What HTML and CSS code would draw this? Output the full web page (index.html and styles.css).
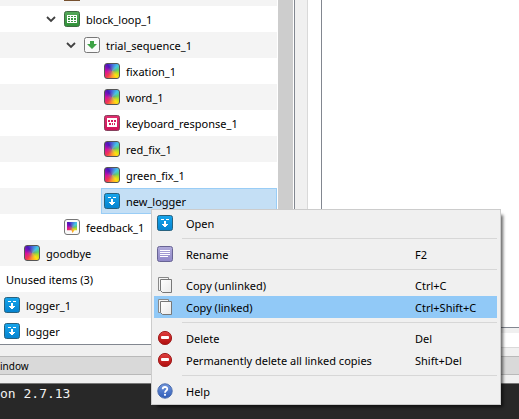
FILE: index.html
```html
<!DOCTYPE html>
<html lang="en">
<head>
<meta charset="utf-8">
<title>Experiment overview</title>
<link rel="stylesheet" href="styles.css">
</head>
<body>
<svg class="defs" aria-hidden="true">
  <defs>
    <linearGradient id="g-green" x2="0" y2="1"><stop stop-color="#56a85a"/><stop offset="1" stop-color="#2f9138"/></linearGradient>
    <linearGradient id="g-pink" x2="0" y2="1"><stop stop-color="#e0306f"/><stop offset="1" stop-color="#cf1259"/></linearGradient>
    <linearGradient id="g-blue" x2="0" y2="1"><stop stop-color="#16a5ec"/><stop offset="1" stop-color="#0583cf"/></linearGradient>
    <linearGradient id="g-violet" x2="0" y2="1"><stop stop-color="#b0aada"/><stop offset="1" stop-color="#9088c8"/></linearGradient>
    <linearGradient id="g-red" x2="0" y2="1"><stop stop-color="#e04040"/><stop offset="1" stop-color="#b00c0c"/></linearGradient>
    <linearGradient id="g-help" x2="0" y2="1"><stop stop-color="#7397dc"/><stop offset="1" stop-color="#2d5bb8"/></linearGradient>
    <linearGradient id="g-page" x2="1" y2="1"><stop stop-color="#ffffff"/><stop offset="1" stop-color="#e9e9e9"/></linearGradient>
    <symbol id="i-loop" viewBox="0 0 16 16">
      <rect x=".5" y=".5" width="15" height="15" rx="2" fill="url(#g-green)" stroke="#3f6b42"/>
      <path fill="#fff" d="M3 4h10v8H3z"/>
      <path fill="#3c9944" d="M4 5h2v1H4zM7 5h2v1H7zM10 5h2v1h-2zM4 7h2v2H4zM7 7h2v2H7zM10 7h2v2h-2zM4 10h2v1H4zM7 10h2v1H7zM10 10h2v1h-2z"/>
    </symbol>
    <symbol id="i-sequence" viewBox="0 0 16 16">
      <rect x=".5" y=".5" width="15" height="15" rx="2" fill="#fafafa" stroke="#777"/>
      <path fill="#3da245" d="M6 4h4v3h3l-5 5-5-5h3z"/>
    </symbol>
    <symbol id="i-keyboard" viewBox="0 0 16 16">
      <rect x=".5" y=".5" width="15" height="15" rx="2" fill="url(#g-pink)" stroke="#85405c"/>
      <rect x="3" y="3" width="10" height="9" fill="#fff"/>
      <path fill="#d81b60" d="M4 5h2v2H4zM7 5h2v2H7zM10 5h2v2h-2zM5 8h2v2H5zM8 8h1v2H8zM10 8h1v2h-1z"/>
    </symbol>
    <symbol id="i-logger" viewBox="0 0 16 16">
      <rect x=".5" y=".5" width="15" height="15" rx="2" fill="url(#g-blue)" stroke="#28627f"/>
      <path fill="#fff" d="M4 4h3v1H4zM9 4h3v1H9zM7 6h2v3h2v1h-1v1H9v1H7v-1H6v-1H5V9h2z"/>
    </symbol>
    <symbol id="i-rename" viewBox="0 0 16 16">
      <rect x=".5" y=".5" width="15" height="15" rx="2" fill="url(#g-violet)" stroke="#686494"/>
      <path fill="#fff" d="M3 4h10v1H3zM3 6h10v1H3zM3 8h10v1H3zM3 10h8v1H3z"/>
    </symbol>
    <symbol id="i-copy" viewBox="0 0 16 16">
      <path fill="#f5f5f5" stroke="#888" d="M1.500 .5h10v13h-10z"/>
      <path fill="url(#g-page)" stroke="#777" d="M3.500 2.500h11v13h-9l-2-2z"/>
    </symbol>
    <symbol id="i-delete" viewBox="0 0 16 16">
      <circle cx="8" cy="8" r="6.600" fill="url(#g-red)" stroke="#a02020"/>
      <rect x="4" y="6" width="8" height="3" rx="1" fill="#fff"/>
    </symbol>
    <symbol id="i-help" viewBox="0 0 16 16">
      <circle cx="8" cy="8" r="7.200" fill="url(#g-help)" stroke="#4a6cae"/>
      <path fill="none" stroke="#fff" stroke-width="1.800" d="M5.700 6.200C5.700 3.300 10.300 3.300 10.300 6C10.300 7.600 8 7.600 8 9.800"/>
      <circle cx="8" cy="11.800" r="1.100" fill="#fff"/>
    </symbol>
    <symbol id="i-chevron" viewBox="0 0 10 8">
      <path fill="none" stroke="#404040" stroke-width="1.800" d="M1 2l4 4 4-4"/>
    </symbol>
  </defs>
</svg>

<div class="workspace">
  <section class="overview" aria-label="Overview">
    <ul class="tree">
      <li class="row row-cut level-2"><span class="icon sliver"></span></li>
      <li class="row level-2"><button class="expander" aria-label="Collapse block_loop_1"><svg><use href="#i-chevron"/></svg></button><svg class="icon"><use href="#i-loop"/></svg><span class="label">block_loop_1</span></li>
      <li class="row level-3"><button class="expander" aria-label="Collapse trial_sequence_1"><svg><use href="#i-chevron"/></svg></button><svg class="icon"><use href="#i-sequence"/></svg><span class="label">trial_sequence_1</span></li>
      <li class="row level-4"><span class="icon sketch"></span><span class="label">fixation_1</span></li>
      <li class="row level-4"><span class="icon sketch"></span><span class="label">word_1</span></li>
      <li class="row level-4"><svg class="icon"><use href="#i-keyboard"/></svg><span class="label">keyboard_response_1</span></li>
      <li class="row level-4"><span class="icon sketch"></span><span class="label">red_fix_1</span></li>
      <li class="row level-4"><span class="icon sketch"></span><span class="label">green_fix_1</span></li>
      <li class="row row-selected"><span class="selection"><svg class="icon"><use href="#i-logger"/></svg><span class="label">new_logger</span></span></li>
      <li class="row level-2"><span class="icon feedback"><span class="bubble"></span></span><span class="label">feedback_1</span></li>
      <li class="row level-1"><span class="icon sketch"></span><span class="label">goodbye</span></li>
      <li class="row row-heading"><span class="label">Unused items (3)</span></li>
      <li class="row"><svg class="icon"><use href="#i-logger"/></svg><span class="label">logger_1</span></li>
      <li class="row"><svg class="icon"><use href="#i-logger"/></svg><span class="label">logger</span></li>
    </ul>
    <div class="scrollbar"></div>
  </section>
  <div class="splitter"></div>
  <main class="editor">
    <div class="page"></div>
    <div class="strip"></div>
    <div class="foot"></div>
  </main>
</div>

<h2 class="dock-title">indow</h2>
<div class="console">on 2.7.13</div>

<div class="menu" role="menu">
  <button class="item" role="menuitem"><svg class="icon"><use href="#i-logger"/></svg><span class="label">Open</span></button>
  <hr>
  <button class="item" role="menuitem"><svg class="icon"><use href="#i-rename"/></svg><span class="label">Rename</span><kbd class="label">F2</kbd></button>
  <hr>
  <button class="item" role="menuitem"><svg class="icon"><use href="#i-copy"/></svg><span class="label">Copy (unlinked)</span><kbd class="label">Ctrl+C</kbd></button>
  <button class="item item-active" role="menuitem"><svg class="icon"><use href="#i-copy"/></svg><span class="label">Copy (linked)</span><kbd class="label">Ctrl+Shift+C</kbd></button>
  <hr>
  <button class="item" role="menuitem"><svg class="icon"><use href="#i-delete"/></svg><span class="label">Delete</span><kbd class="label">Del</kbd></button>
  <button class="item" role="menuitem"><svg class="icon"><use href="#i-delete"/></svg><span class="label">Permanently delete all linked copies</span><kbd class="label">Shift+Del</kbd></button>
  <hr>
  <button class="item" role="menuitem"><svg class="icon"><use href="#i-help"/></svg><span class="label">Help</span></button>
</div>
</body>
</html>
```
FILE: styles.css
```css
* {
  box-sizing: border-box;
}

body {
  display: flex;
  flex-direction: column;
  min-height: 100vh;
  margin: 0;
  overflow: hidden;
  background: #f0f0f0;
  color: #000;
  font: 11px/16px "Noto Sans", "Open Sans", sans-serif;
}

button {
  padding: 0;
  border: 0;
  background: none;
  color: inherit;
  font: inherit;
  text-align: left;
}

.defs {
  position: absolute;
  width: 0;
  height: 0;
}

.icon {
  flex: none;
  width: 16px;
  height: 16px;
}

.label {
  padding-top: 2px;
}

.workspace {
  display: grid;
  grid-template-columns: 295px 12px 1fr;
}

/* Item tree */
.overview {
  display: flex;
  border-right: 1px solid #828790;
  border-bottom: 1px solid #828790;
  background: #fff;
}

.tree {
  flex: 1;
  margin: 0 1px 0 0;
  padding: 0;
  list-style: none;
}

.row {
  display: flex;
  align-items: center;
  gap: 6px;
  height: 26px;
  padding-left: 4px;
  white-space: nowrap;
}

.row:nth-child(odd) {
  background: #f4f4f4;
}

.level-1 { padding-left: 24px; }
.level-2 { padding-left: 64px; }
.level-3 { padding-left: 84px; }
.level-4 { padding-left: 104px; }

.row-heading {
  padding-left: 6px;
}

.row-cut {
  align-items: flex-start;
  height: 6px;
  overflow: hidden;
}

.sliver {
  height: 1px;
  background: #76502f;
}

.row-selected {
  padding-left: 101px;
}

.selection {
  display: flex;
  flex: 1;
  align-items: center;
  align-self: stretch;
  gap: 6px;
  padding-left: 2px;
  border: 1px solid #99cdf6;
  background: #c4dff5;
}

.expander {
  display: flex;
  width: 10px;
  margin-left: -18px;
  margin-right: 2px;
}

.expander svg {
  width: 10px;
  height: 8px;
}

.sketch {
  border: 1px solid #555;
  border-radius: 3px;
}

.sketch,
.bubble {
  background:
    radial-gradient(circle, rgba(150, 125, 150, 0.7), rgba(150, 125, 150, 0) 50%),
    conic-gradient(#4a62d8, #45c5e8 45deg, #58d070 80deg, #b8e020 110deg, #ffe010 140deg, #ff9a30 180deg, #f23a50 220deg, #d8109a 265deg, #8a10b8 295deg, #4a18b8 325deg, #4a62d8);
}

.feedback {
  padding: 2px;
  border: 1px solid #777;
  border-radius: 3px;
  background: #fafafa;
}

.bubble {
  display: block;
  height: 11px;
  clip-path: polygon(0 0, 100% 0, 100% 75%, 75% 75%, 55% 100%, 45% 75%, 0 75%);
}

.scrollbar {
  width: 15px;
  margin-right: 1px;
  background: #cdcdcd;
}

/* Editor pane */
.editor {
  display: flex;
  flex-direction: column;
  border-left: 1px solid #d9d9d9;
  background: #fff;
}

.page {
  flex: 1;
  margin-left: 13px;
  border-left: 1px solid #828790;
  border-bottom: 1px solid #828790;
}

.strip {
  height: 5px;
  background: #f0f0f0;
}

.foot {
  height: 15px;
  margin-bottom: -3px;
  border-bottom: 1px solid #d9d9d9;
  background: #fff;
}

/* Console dock */
.dock-title {
  margin: 11px 0 8px;
  padding-top: 2px;
  border: solid #b9b9b9;
  border-width: 1px 0;
  background: #d9d9d9;
  font-size: 10px;
  font-weight: 400;
  line-height: 15px;
}

.console {
  flex: 1;
  padding-top: 2px;
  border-top: 1px solid #777;
  background: #282828;
  color: #f2f2f2;
  font: 13px/16px "DejaVu Sans Mono", monospace;
}

/* Context menu */
.menu {
  position: absolute;
  top: 209px;
  left: 151px;
  width: 350px;
  padding: 2px 3px 2px 2px;
  border: 1px solid #ccc;
  background: #f0f0f0;
  box-shadow: 4px 4px 3px -2px rgba(0, 0, 0, 0.6);
}

.item {
  display: grid;
  grid-template-columns: 16px 1fr 78px;
  column-gap: 13px;
  align-items: center;
  width: 100%;
  height: 22px;
  padding: 0 4px 0 3px;
  white-space: nowrap;
}

.item-active {
  background: #91c9f7;
}

.item kbd {
  font: inherit;
}

.menu hr {
  height: 1px;
  margin: 4px 0 4px 28px;
  border: 0;
  background: #d7d7d7;
}
```
